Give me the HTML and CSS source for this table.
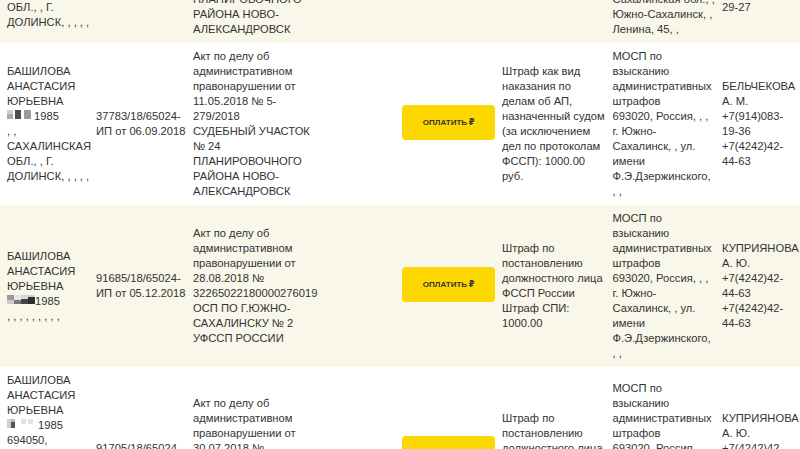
FILE: index.html
```html
<!DOCTYPE html>
<html lang="ru">
<head>
<meta charset="utf-8">
<title>Задолженности</title>
<link rel="stylesheet" href="styles.css">
</head>
<body>
<div class="viewport">
<table class="fines">
<colgroup>
<col class="c-debtor"><col class="c-ip"><col class="c-doc"><col class="c-gap"><col class="c-pay"><col class="c-subject"><col class="c-dept"><col class="c-bailiff">
</colgroup>
<tbody>
<tr class="shade">
<td><div>БАШИЛОВА АНАСТАСИЯ ЮРЬЕВНА <span class="dob"><span class="blur"><i class="b1"></i><i class="b3"></i><i class="b2"></i></span> 1985</span></div><div>694050, РОССИЯ, , САХАЛИНСКАЯ ОБЛ., , Г. ДОЛИНСК, , , , ,</div></td>
<td>37790/18/65024-ИП от 06.09.2018</td>
<td><div>Акт по делу об административном правонарушении от 25.04.2018 № 5-<wbr>243/2018</div><div>СУДЕБНЫЙ УЧАСТОК №&nbsp;24 ПЛАНИРОВОЧНОГО РАЙОНА НОВО-АЛЕКСАНДРОВСК</div></td>
<td></td>
<td><a class="pay-btn" href="#">ОПЛАТИТЬ&#8239;₽</a></td>
<td class="subject">Исполнительский сбор: 1000.00 руб.</td>
<td class="dept"><div>Отдел судебных приставов по г. Южно-Сахалинску УФССП России по Сахалинской области</div><div>693000, Россия, , Сахалинская обл., , Южно-Сахалинск, , Ленина, 45, ,</div></td>
<td><div>ПАНКРАТОВА ЕЛЕНА СЕРГЕЕВНА</div><div>+7(4242)42-44-63</div><div>+7(4242)72-29-27</div></td>
</tr>
<tr>
<td><div>БАШИЛОВА АНАСТАСИЯ ЮРЬЕВНА <span class="dob"><span class="blur"><i class="b1"></i><i class="b3"></i><i class="b2"></i></span> 1985</span></div><div>, , САХАЛИНСКАЯ ОБЛ., , Г. ДОЛИНСК, , , , ,</div></td>
<td>37783/18/65024-ИП от 06.09.2018</td>
<td><div>Акт по делу об административном правонарушении от 11.05.2018 № 5-<wbr>279/2018</div><div>СУДЕБНЫЙ УЧАСТОК №&nbsp;24 ПЛАНИРОВОЧНОГО РАЙОНА НОВО-АЛЕКСАНДРОВСК</div></td>
<td></td>
<td><a class="pay-btn" href="#">ОПЛАТИТЬ&#8239;₽</a></td>
<td class="subject">Штраф как вид наказания по делам об АП, назначенный судом (за исключением дел по протоколам ФССП): 1000.00 руб.</td>
<td class="dept"><div>МОСП по взысканию административных штрафов</div><div>693020, Россия, , , г. Южно-Сахалинск, , ул. имени Ф.Э.Дзержинского, , ,</div></td>
<td><div>БЕЛЬЧЕКОВА А. М.</div><div>+7(914)083-19-36</div><div>+7(4242)42-44-63</div></td>
</tr>
<tr class="shade">
<td><div>БАШИЛОВА АНАСТАСИЯ ЮРЬЕВНА <span class="dob"><span class="blur"><i class="b4"></i><i class="b5"></i><i class="b6"></i><i class="b7"></i></span>1985</span></div><div>, , , , , , , , ,</div></td>
<td>91685/18/65024-ИП от 05.12.2018</td>
<td><div>Акт по делу об административном правонарушении от 28.08.2018 № 32265022180000276019</div><div>ОСП ПО Г.ЮЖНО-САХАЛИНСКУ №&nbsp;2 УФССП РОССИИ</div></td>
<td></td>
<td><a class="pay-btn" href="#">ОПЛАТИТЬ&#8239;₽</a></td>
<td class="subject">Штраф по постановлению должностного лица ФССП России Штраф СПИ: 1000.00</td>
<td class="dept"><div>МОСП по взысканию административных штрафов</div><div>693020, Россия, , , г. Южно-Сахалинск, , ул. имени Ф.Э.Дзержинского, , ,</div></td>
<td><div>КУПРИЯНОВА А. Ю.</div><div>+7(4242)42-44-63</div><div>+7(4242)42-44-63</div></td>
</tr>
<tr>
<td><div>БАШИЛОВА АНАСТАСИЯ ЮРЬЕВНА <span class="dob"><span class="blur"><i class="b8"></i><i class="b9"></i><i class="b10"></i><i class="b10"></i></span> 1985</span></div><div>694050, РОССИЯ, , САХАЛИНСКАЯ ОБЛ., , Г. ДОЛИНСК, , УЛ. ШКОЛЬНАЯ, Д. 12, КВ. 4, , ,</div></td>
<td>91705/18/65024-ИП от 10.12.2018</td>
<td><div>Акт по делу об административном правонарушении от 30.07.2018 № 32265022180000261507</div><div>ОСП ПО Г.ЮЖНО-САХАЛИНСКУ №&nbsp;2 УФССП РОССИИ</div></td>
<td></td>
<td><a class="pay-btn" href="#">ОПЛАТИТЬ&#8239;₽</a></td>
<td class="subject">Штраф по постановлению должностного лица ФССП России Штраф СПИ: 1000.00</td>
<td class="dept"><div>МОСП по взысканию административных штрафов</div><div>693020, Россия, , , г. Южно-Сахалинск, , ул. имени Ф.Э.Дзержинского, , ,</div></td>
<td><div>КУПРИЯНОВА А. Ю.</div><div>+7(4242)42-44-63</div><div>+7(4242)42-44-63</div></td>
</tr>
</tbody>
</table>
</div>
</body>
</html>
```
FILE: styles.css
```css
html, body {
  margin: 0;
  background: #fff;
}
body {
  font-family: "Liberation Sans", Arial, sans-serif;
  font-size: 11.2px;
  line-height: 15px;
  color: #333;
}
.viewport {
  width: 800px;
  height: 449px;
  overflow: hidden;
}
.fines {
  border-collapse: collapse;
  table-layout: fixed;
  width: 800px;
  margin-top: -119px;
}
.c-debtor { width: 92px; }
.c-ip { width: 97px; }
.c-doc { width: 132px; }
.c-gap { width: 77px; }
.c-pay { width: 100px; }
.c-subject { width: 110.5px; }
.c-dept { width: 109.5px; }
.c-bailiff { width: 82px; }
.fines td {
  padding: 6px 1px 6px 4px;
  vertical-align: middle;
}
.fines td:first-child {
  padding-left: 7px;
}
.fines td.subject {
  padding-right: 3px;
}
.fines td.dept {
  padding-right: 3.08px;
}
.shade {
  background: #f8f7e9;
}
.pay-btn {
  display: flex;
  align-items: center;
  justify-content: center;
  width: 93px;
  height: 35px;
  margin-bottom: 4px;
  background: #fdd800;
  border-radius: 4px;
  font-family: "Liberation Sans", "DejaVu Sans", sans-serif;
  font-size: 8px;
  font-weight: 700;
  color: #333;
  text-decoration: none;
}
.dob {
  white-space: nowrap;
}
.blur {
  display: inline-block;
  vertical-align: -1px;
  height: 9px;
}
.blur i {
  display: inline-block;
  height: 9px;
  vertical-align: top;
}
.blur .b1 { width: 6px; background: linear-gradient(#d0d0d0 45%, #a9a9a9 45%); margin-right: 2px; }
.blur .b3 { width: 6px; background: #4d4d4d; margin-right: 3px; }
.blur .b2 { width: 7px; background: #9b9b9b; }
.blur .b4 { width: 7px; background: linear-gradient(#9a9a9a 50%, #c9c9c9 50%); }
.blur .b5 { width: 7px; background: linear-gradient(#e6e6e2 50%, #777 50%); }
.blur .b6 { width: 7px; background: linear-gradient(#d8d8d4 40%, #444 40%); }
.blur .b7 { width: 7px; background: linear-gradient(#d0d0cc 20%, #2f2f2f 20%); }
.blur .b8 { width: 4px; background: #cfcfcf; }
.blur .b9 { width: 4px; background: linear-gradient(#bbb 30%, #555 30%); margin-right: 6px; }
.blur .b10 { width: 5px; background: linear-gradient(#e3e3e3 50%, #fff 50%); margin-right: 2px; }
```
